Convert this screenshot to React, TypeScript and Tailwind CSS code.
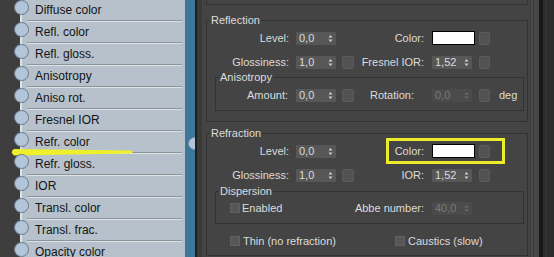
import React from "react";

const FONT = { fontFamily: '"Liberation Sans", Arial, sans-serif' };

function Spinner({ v, disabled }: { v: string; disabled?: boolean }) {
  return (
    <div
      className={
        disabled
          ? "flex h-[13px] w-[40px] shrink-0 items-center justify-between rounded-[1px] bg-[#4b4b4b] pl-[3px] pr-[3px] text-[#7a7a7a]"
          : "flex h-[13px] w-[40px] shrink-0 items-center justify-between rounded-[1px] bg-[#575757] pl-[3px] pr-[3px] text-[#dcdcdc]"
      }
    >
      <span>{v}</span>
      <svg width="5" height="9" viewBox="0 0 5 9">
        <path d="M0.5 3.5 L2.5 1 L4.5 3.5Z M0.5 5.5 L4.5 5.5 L2.5 8Z" fill={disabled ? "#6e6e6e" : "#d2d2d2"} />
      </svg>
    </div>
  );
}

function MapBtn({ wide }: { wide?: boolean }) {
  return (
    <div
      className={
        wide
          ? "h-[13px] w-[12px] shrink-0 rounded-[2px] border border-[#5b5b5b] bg-[#525252]"
          : "h-[13px] w-[11px] shrink-0 rounded-[2px] border border-[#5b5b5b] bg-[#525252]"
      }
    />
  );
}

function Swatch() {
  return <div className="h-[14px] w-[43px] shrink-0 border border-black bg-white" />;
}

function Check() {
  return <div className="h-[10px] w-[10px] shrink-0 border border-[#616161] bg-[#575757]" />;
}

const nodes = [
  "Diffuse color",
  "Refl. color",
  "Refl. gloss.",
  "Anisotropy",
  "Aniso rot.",
  "Fresnel IOR",
  "Refr. color",
  "Refr. gloss.",
  "IOR",
  "Transl. color",
  "Transl. frac.",
  "Opacity color",
];

export default function App() {
  return (
    <div className="relative flex h-[257px] w-[554px] overflow-hidden bg-[#3e3e3e]" style={FONT}>
      {/* left dark strip */}
      <div className="w-[20px] shrink-0 bg-[#3e3e3e]" />
      <div className="w-[2px] shrink-0 bg-[#dde3e8]" />
      {/* node panel */}
      <div className="w-[163px] shrink-0 bg-[#b6c1cb]">
        <div className="-mt-[1px] flex flex-col">
          {nodes.map((n) => (
            <div key={n} className="flex h-[22px] items-stretch">
              <div className="relative z-[1] -ml-[8px] pt-[1px]">
                <div className="h-[15px] w-[15px] rounded-full border border-[#66788c] bg-[#b3c5d9]" />
              </div>
              <div className="-ml-[2px] mr-[3px] flex flex-1 items-center border-b border-[#8d959c] pl-[8px] text-[12px] text-[#141414] shadow-[inset_0_1px_0_#dde2e7]">
                {n}
              </div>
            </div>
          ))}
        </div>
      </div>
      {/* blue stripe with output socket */}
      <div className="w-[10px] shrink-0 bg-[#3c7698]">
        <div className="ml-[3px] mt-[137px] h-[13px] w-[13px] rounded-full border border-[#7890a8] bg-[#b3c5d9]" />
      </div>
      <div className="w-[2px] shrink-0 bg-[#1f1f1f]" />
      <div className="w-[5px] shrink-0 bg-[#3a3a3a]" />

      {/* main panel */}
      <div className="flex w-[328px] shrink-0 flex-col bg-[#444444] pl-[4px] pr-[2px] text-[11px] leading-[14px] text-[#dcdcdc]">
        <div className="h-[5px] shrink-0 border-x border-b border-[#323232]" />

        {/* Reflection */}
        <fieldset className="mt-[8px] border border-[#323232] pb-[10px]">
          <legend className="ml-[3px] px-[1px]">Reflection</legend>
          <div className="mt-[4px] flex h-[14px] items-center">
            <span className="w-[82px] shrink-0 text-right">Level:</span>
            <div className="ml-[7px]"><Spinner v="0,0" /></div>
            <div className="ml-[6px] w-[12px] shrink-0" />
            <span className="w-[70px] shrink-0 text-right">Color:</span>
            <div className="ml-[8px]"><Swatch /></div>
            <div className="ml-[4px]"><MapBtn /></div>
          </div>
          <div className="mt-[10px] flex h-[14px] items-center">
            <span className="w-[82px] shrink-0 text-right">Glossiness:</span>
            <div className="ml-[7px]"><Spinner v="1,0" /></div>
            <div className="ml-[6px]"><MapBtn wide /></div>
            <span className="w-[70px] shrink-0 text-right">Fresnel IOR:</span>
            <div className="ml-[8px]"><Spinner v="1,52" /></div>
            <div className="ml-[7px]"><MapBtn /></div>
          </div>
          <fieldset className="ml-[8px] mr-[3px] mt-[1px] border border-[#323232] pb-[8px]">
            <legend className="ml-[3px] px-[1px]">Anisotropy</legend>
            <div className="mt-[4px] flex h-[14px] items-center">
              <span className="w-[72px] shrink-0 text-right">Amount:</span>
              <div className="ml-[8px]"><Spinner v="0,0" /></div>
              <div className="ml-[6px]"><MapBtn wide /></div>
              <span className="w-[60px] shrink-0 text-right">Rotation:</span>
              <div className="ml-[18px]"><Spinner v="0,0" disabled /></div>
              <div className="ml-[7px]"><MapBtn /></div>
              <span className="ml-[9px]">deg</span>
            </div>
          </fieldset>
        </fieldset>

        {/* Refraction */}
        <fieldset className="mt-[4px] border border-[#323232] pb-[7px]">
          <legend className="ml-[3px] px-[1px]">Refraction</legend>
          <div className="relative mt-[4px] flex h-[14px] items-center">
            <span className="w-[82px] shrink-0 text-right">Level:</span>
            <div className="ml-[7px]"><Spinner v="0,0" /></div>
            <div className="ml-[6px] w-[12px] shrink-0" />
            <span className="w-[70px] shrink-0 text-right">Color:</span>
            <div className="ml-[8px]"><Swatch /></div>
            <div className="ml-[4px]"><MapBtn /></div>
            <div className="pointer-events-none absolute left-[179px] top-[-6px] h-[26px] w-[119px] border-[3px] border-[#ecec2a]" />
          </div>
          <div className="mt-[10px] flex h-[14px] items-center">
            <span className="w-[82px] shrink-0 text-right">Glossiness:</span>
            <div className="ml-[7px]"><Spinner v="1,0" /></div>
            <div className="ml-[6px]"><MapBtn wide /></div>
            <span className="w-[70px] shrink-0 text-right">IOR:</span>
            <div className="ml-[8px]"><Spinner v="1,52" /></div>
            <div className="ml-[7px]"><MapBtn /></div>
          </div>
          <fieldset className="ml-[8px] mr-[3px] mt-[2px] border border-[#323232] pb-[8px]">
            <legend className="ml-[3px] px-[1px]">Dispersion</legend>
            <div className="mt-[3px] flex h-[14px] items-center">
              <div className="flex w-[138px] shrink-0 items-center pl-[14px]">
                <Check />
                <span className="ml-[2px]">Enabled</span>
              </div>
              <span className="w-[70px] shrink-0 text-right">Abbe number:</span>
              <div className="ml-[8px]"><Spinner v="40,0" disabled /></div>
            </div>
          </fieldset>
          <div className="mt-[10px] flex h-[14px] items-center">
            <div className="flex w-[188px] shrink-0 items-center pl-[23px]">
              <Check />
              <span className="ml-[3px]">Thin (no refraction)</span>
            </div>
            <Check />
            <span className="ml-[3px]">Caustics (slow)</span>
          </div>
        </fieldset>
      </div>

      {/* right scroll area */}
      <div className="w-[1px] shrink-0 bg-[#3a3a3a]" />
      <div className="w-[2px] shrink-0 bg-[#4c4c4c]" />
      <div className="w-[1px] shrink-0 bg-[#373737]" />
      <div className="w-[5px] shrink-0 bg-[#474747]" />
      <div className="w-[4px] shrink-0 bg-[#171717]" />
      <div className="w-[3px] shrink-0 bg-[#2d2d2d]" />
      <div className="w-[1px] shrink-0 bg-[#353535]" />
      <div className="w-[7px] shrink-0 bg-[#2b2b2b]" />

      {/* yellow annotation stroke */}
      <svg className="pointer-events-none absolute left-0 top-[140px]" width="140" height="20" viewBox="0 0 140 20">
        <path d="M14 9 L131 10.5 Q134.5 12 131 13.5 L14 15.5 Q9.5 12.2 14 9 Z" fill="#eef02c" />
      </svg>
    </div>
  );
}
